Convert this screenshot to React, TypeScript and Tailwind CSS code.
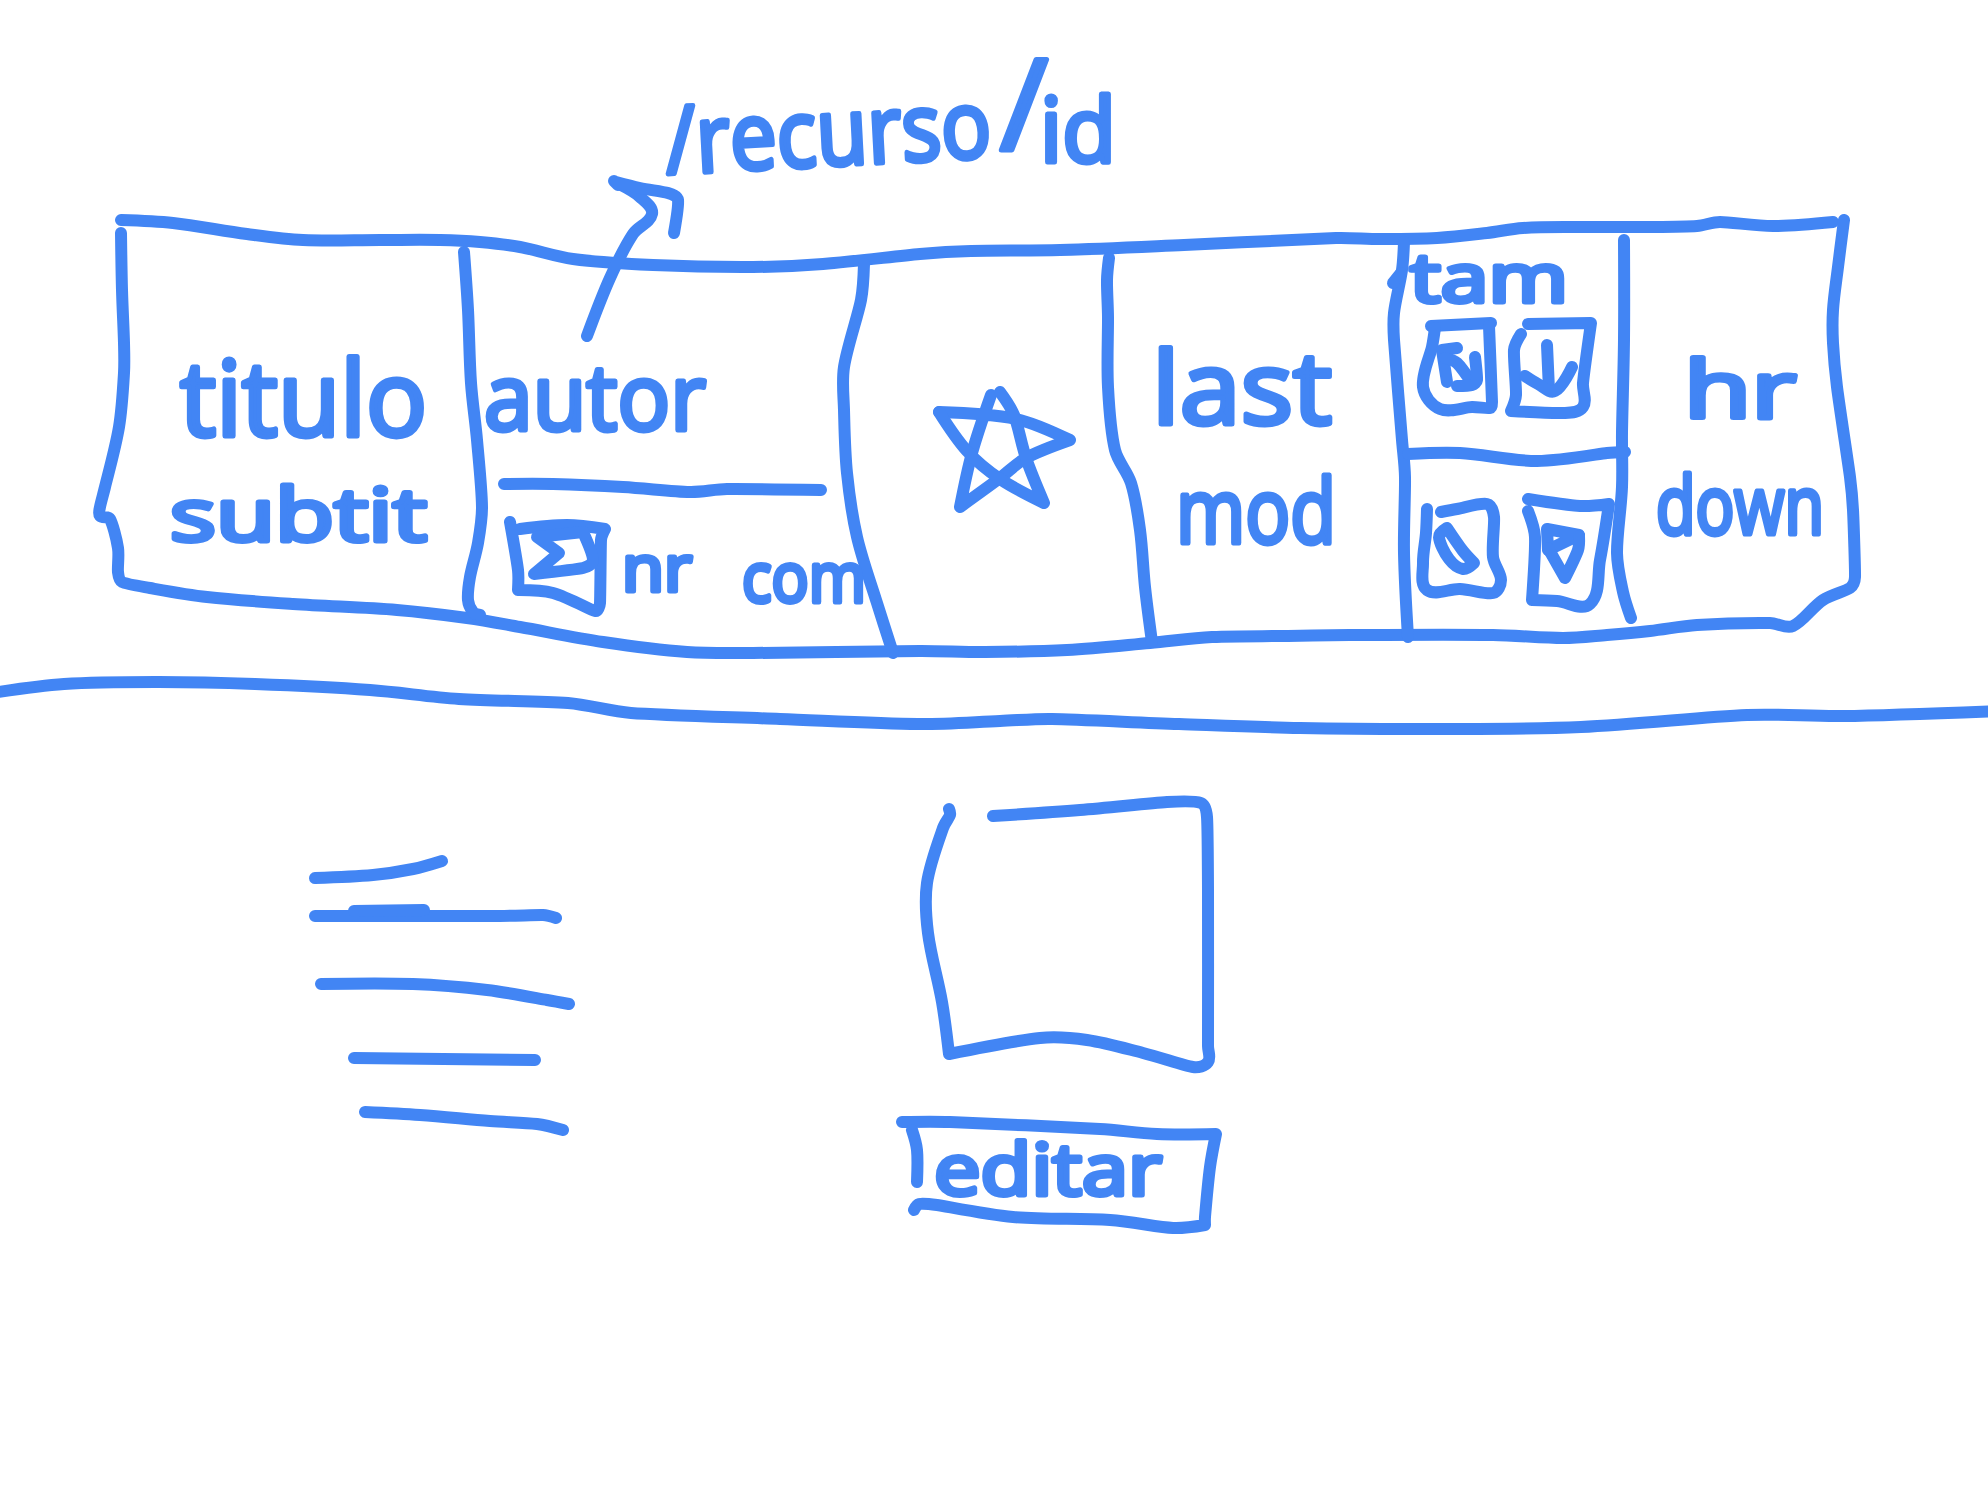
import React from "react";

type Point = [number, number];

const distance = (p: Point, q: Point) => Math.hypot(q[0] - p[0], q[1] - p[1]);

const unit = (p: Point, q: Point): Point => {
  const len = distance(p, q) || 1;
  return [(q[0] - p[0]) / len, (q[1] - p[1]) / len];
};

/** Direction of the curve at point i; null at the ends and at sharp corners. */
function tangent(points: Point[], i: number): Point | null {
  if (i === 0 || i === points.length - 1) return null;
  const before = unit(points[i - 1], points[i]);
  const after = unit(points[i], points[i + 1]);
  if (before[0] * after[0] + before[1] * after[1] < 0.1) return null;
  return unit(points[i - 1], points[i + 1]);
}

/** Turns a list of points into a smooth freehand curve. */
function smooth(points: Point[]): string {
  let d = `M${points[0][0]} ${points[0][1]}`;
  for (let i = 0; i < points.length - 1; i++) {
    const b = points[i];
    const c = points[i + 1];
    const len = distance(b, c);
    const k1 = i > 0 ? Math.min(len, 1.4 * distance(points[i - 1], b)) / 3 : 0;
    const k2 = i + 2 < points.length ? Math.min(len, 1.4 * distance(c, points[i + 2])) / 3 : 0;
    const t1 = tangent(points, i);
    const t2 = tangent(points, i + 1);
    const h1: Point = t1 ? [b[0] + t1[0] * k1, b[1] + t1[1] * k1] : b;
    const h2: Point = t2 ? [c[0] - t2[0] * k2, c[1] - t2[1] * k2] : c;
    d += `C${h1[0]} ${h1[1]} ${h2[0]} ${h2[1]} ${c[0]} ${c[1]}`;
  }
  return d;
}

const card: Point[][] = [
  [[121, 220], [173, 223], [247, 234], [303, 240], [380, 240], [440, 240], [480, 242], [520, 247], [573, 259], [653, 265], [753, 267], [823, 264], [920, 254], [971, 251], [1060, 250], [1184, 245], [1336, 238], [1380, 239], [1437, 238], [1487, 233], [1523, 228], [1577, 227], [1650, 227], [1697, 226], [1720, 222], [1773, 226], [1833, 222]],
  [[121, 233], [122, 290], [124, 343], [124, 373], [119, 427], [105, 487], [100, 507], [100, 516], [110, 519], [118, 548], [118, 572], [122, 582], [150, 588], [207, 597], [293, 604], [397, 610], [467, 618], [520, 627], [603, 642], [687, 652], [753, 653], [920, 651], [985, 652], [1067, 650], [1150, 643], [1212, 637], [1288, 636], [1360, 635], [1493, 635], [1563, 638], [1607, 635], [1650, 631], [1697, 625], [1770, 623], [1793, 626], [1823, 600], [1850, 588], [1855, 577], [1853, 510], [1850, 477], [1837, 387], [1833, 343], [1833, 310], [1838, 267], [1844, 220]],
];

const dividers: Point[][] = [
  [[464, 252], [468, 310], [471, 383], [477, 440], [482, 507], [478, 543], [470, 577], [468, 600], [473, 612], [480, 615]],
  [[864, 264], [861, 300], [844, 367], [844, 410], [847, 473], [857, 537], [877, 603], [893, 653]],
  [[1109, 258], [1107, 280], [1108, 317], [1108, 387], [1115, 450], [1131, 483], [1140, 530], [1145, 587], [1152, 642]],
  [[1404, 242], [1402, 270], [1394, 313], [1394, 340], [1402, 440], [1405, 477], [1404, 553], [1408, 637]],
  [[1393, 283], [1401, 273]],
  [[1624, 240], [1624, 340], [1622, 433], [1622, 487], [1617, 553], [1623, 592], [1631, 618]],
  [[1408, 454], [1460, 453], [1537, 461], [1607, 453], [1625, 452]],
  [[504, 484], [553, 484], [623, 487], [690, 492], [727, 489], [821, 490]],
];

const arrow: Point[][] = [
  [[587, 336], [610, 278], [633, 234], [652, 214], [640, 197], [619, 184]],
  [[614, 181], [618, 185], [616, 182], [640, 188], [668, 193], [678, 200], [674, 233]],
];

const star: Point[][] = [
  [[991, 395], [972, 453], [960, 507], [1000, 478], [1026, 458], [1070, 440], [1016, 419], [939, 412]],
  [[939, 412], [967, 451], [1000, 479], [1044, 503], [1026, 458], [1014, 415], [1000, 392]],
];

const sumIcon: Point[][] = [
  [[510, 522], [518, 570], [518, 590], [553, 593], [595, 611], [600, 603], [601, 540], [605, 529], [567, 525], [520, 529]],
  [[583, 532], [537, 537], [559, 553], [534, 574], [583, 568], [593, 560], [583, 532]],
];

const resizeIcon: Point[][] = [
  [[1431, 326], [1491, 323]],
  [[1435, 328], [1432, 347], [1423, 387], [1440, 409], [1472, 407], [1490, 408], [1492, 402], [1489, 326]],
  [[1457, 348], [1442, 350], [1447, 382]],
  [[1445, 358], [1457, 363], [1472, 383]],
  [[1475, 357], [1477, 380], [1472, 385], [1457, 386]],
];

const downloadIcon: Point[][] = [
  [[1528, 324], [1591, 323], [1583, 383], [1583, 407], [1563, 413], [1511, 411], [1516, 395], [1514, 350], [1521, 334]],
  [[1547, 345], [1549, 390]],
  [[1525, 376], [1538, 384], [1555, 391], [1572, 367]],
];

const pencilIcon: Point[][] = [
  [[1427, 509], [1426, 533], [1423, 563], [1427, 590], [1460, 589], [1493, 593], [1501, 580], [1493, 557], [1494, 517], [1487, 504], [1457, 509], [1441, 512]],
  [[1447, 528], [1463, 551], [1474, 563], [1463, 569], [1449, 559], [1439, 537], [1447, 528]],
];

const deleteIcon: Point[][] = [
  [[1528, 511], [1535, 537], [1532, 600], [1557, 601], [1590, 604], [1600, 560], [1609, 504], [1580, 506], [1528, 499]],
  [[1547, 529], [1579, 535], [1548, 550], [1547, 529]],
  [[1579, 536], [1578, 550], [1565, 578], [1548, 548]],
];

const pageRule: Point[][] = [
  [[-8, 693], [64, 684], [159, 682], [255, 684], [370, 690], [459, 699], [568, 703], [631, 713], [780, 719], [918, 724], [1000, 721], [1052, 719], [1179, 724], [1300, 728], [1434, 729], [1581, 727], [1747, 715], [1843, 716], [1998, 711]],
];

const description: Point[][] = [
  [[315, 878], [373, 875], [413, 869], [442, 861]],
  [[315, 916], [500, 916], [543, 915], [556, 918]],
  [[354, 911], [424, 910]],
  [[321, 984], [413, 984], [487, 990], [547, 1000], [569, 1004]],
  [[354, 1058], [535, 1060]],
  [[365, 1112], [420, 1115], [490, 1121], [537, 1124], [563, 1130]],
];

const preview: Point[][] = [
  [[949, 809], [950, 815], [943, 828], [927, 883], [928, 933], [942, 1002], [949, 1054], [1040, 1038], [1087, 1040], [1143, 1053], [1193, 1067], [1208, 1062], [1208, 1046], [1208, 890], [1207, 817], [1201, 803], [1167, 802], [1080, 810], [993, 816]],
];

const button: Point[][] = [
  [[902, 1122], [950, 1122], [1100, 1129], [1157, 1134], [1216, 1134], [1210, 1167], [1205, 1217], [1205, 1225], [1173, 1228], [1110, 1220], [1013, 1217], [937, 1205], [919, 1204], [914, 1210]],
  [[912, 1130], [917, 1150], [917, 1182]],
];

function Strokes({ lines }: { lines: Point[][] }) {
  return (
    <g className="fill-none stroke-[#4285f4] stroke-[12]" strokeLinecap="round" strokeLinejoin="round">
      {lines.map((line, i) => (
        <path key={i} d={smooth(line)} />
      ))}
    </g>
  );
}

interface NoteProps {
  x: number;
  y: number;
  width: number;
  size: number;
  tilt?: number;
  children: string;
}

function Note({ x, y, width, size, tilt = 0, children }: NoteProps) {
  return (
    <text
      x={x}
      y={y}
      fontSize={size}
      textLength={width}
      lengthAdjust="spacingAndGlyphs"
      transform={`rotate(${tilt} ${x} ${y})`}
      strokeLinejoin="round"
      className="fill-[#4285f4] stroke-[#4285f4] stroke-[5] font-['Open_Sans',sans-serif]"
    >
      {children}
    </text>
  );
}

export default function App() {
  return (
    <main className="h-[1491px] w-[1988px] overflow-hidden bg-white">
      <svg viewBox="0 0 1988 1491" className="block h-full w-full">
        <Strokes lines={card} />
        <Strokes lines={dividers} />
        <Strokes lines={arrow} />
        <Strokes lines={star} />
        <Strokes lines={sumIcon} />
        <Strokes lines={resizeIcon} />
        <Strokes lines={downloadIcon} />
        <Strokes lines={pencilIcon} />
        <Strokes lines={deleteIcon} />
        <Strokes lines={pageRule} />
        <Strokes lines={description} />
        <Strokes lines={preview} />
        <Strokes lines={button} />

        <Note x={667} y={174} width={326} size={94} tilt={-3}>/recurso</Note>
        <Note x={1000} y={150} width={48} size={126}>/</Note>
        <Note x={1040} y={162} width={76} size={90}>id</Note>
        <Note x={180} y={436} width={247} size={104}>titulo</Note>
        <Note x={170} y={541} width={257} size={74}>subtit</Note>
        <Note x={484} y={430} width={222} size={92}>autor</Note>
        <Note x={622} y={591} width={70} size={64}>nr</Note>
        <Note x={742} y={602} width={124} size={70}>com</Note>
        <Note x={1152} y={424} width={180} size={100}>last</Note>
        <Note x={1176} y={543} width={160} size={90}>mod</Note>
        <Note x={1410} y={302} width={158} size={68}>tam</Note>
        <Note x={1684} y={418} width={112} size={78}>hr</Note>
        <Note x={1656} y={534} width={168} size={80}>down</Note>
        <Note x={934} y={1195} width={228} size={72}>editar</Note>
      </svg>
    </main>
  );
}
